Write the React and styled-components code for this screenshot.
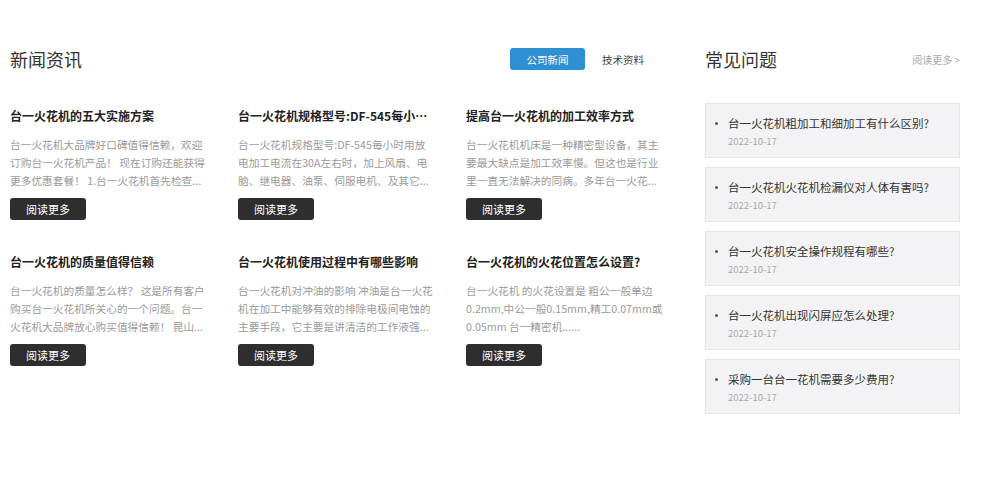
import styled, { createGlobalStyle } from "styled-components";

const GlobalStyle = createGlobalStyle`
    body{
        margin:0;
        background:#fff;
        font-family:"Noto Sans CJK SC","Noto Sans",sans-serif;
        color:#333;
    }
`

const Page = styled.div`
    display:flex;
    align-items:flex-start;
    padding:46px 0 0 10px;
    gap:44px;
`
const NewsSection = styled.section`
    width:651px;
`
const FaqSection = styled.section`
    width:255px;
`
const Header = styled.div`
    display:flex;
    align-items:center;
    justify-content:space-between;
    height:26px;
`
const Heading = styled.h2`
    margin:0;
    font-size:18px;
    font-weight:normal;
    color:#333;
    line-height:26px;
`
const Tabs = styled.div`
    display:flex;
    align-items:center;
    gap:17px;
    margin-right:17px;
`
const Tab = styled.span`
    display:inline-flex;
    align-items:center;
    justify-content:${p => p.active ? "center" : "flex-start"};
    width:${p => p.active ? "75px" : "auto"};
    height:22px;
    border-radius:3px;
    font-size:10.5px;
    background:${p => p.active ? "#2f8fd3" : "transparent"};
    color:${p => p.active ? "#fff" : "#444"};
`
const CardGrid = styled.div`
    display:grid;
    grid-template-columns:repeat(3,195px);
    column-gap:33px;
    row-gap:33px;
    margin-top:35px;
`
const Card = styled.div`
    display:flex;
    flex-direction:column;
    align-items:flex-start;
`
const CardTitle = styled.h3`
    margin:0;
    font-size:12px;
    line-height:18px;
    font-weight:bold;
    color:#222;
    white-space:nowrap;
    overflow:hidden;
    text-overflow:ellipsis;
    width:196px;
`
const CardText = styled.p`
    margin:11px 0 0;
    width:198px;
    font-size:10.7px;
    line-height:18px;
    color:#9a9a9a;
    height:54px;
    overflow:hidden;
    display:-webkit-box;
    -webkit-box-orient:vertical;
    -webkit-line-clamp:3;
`
const ReadBtn = styled.button`
    margin-top:8px;
    width:76px;
    height:22px;
    border:none;
    border-radius:3px;
    background:#2e2e2e;
    color:#fff;
    font-family:inherit;
    font-size:11px;
    padding:0;
`
const MoreLink = styled.a`
    font-size:10px;
    color:#aaa;
    text-decoration:none;
`
const FaqList = styled.ul`
    list-style:none;
    margin:31px 0 0;
    padding:0;
    display:flex;
    flex-direction:column;
    gap:9px;
`
const FaqItem = styled.li`
    background:#f3f3f5;
    border:1px solid #e6e6ea;
    height:55px;
    box-sizing:border-box;
    padding:11px 0 0 9px;
`
const FaqTitle = styled.div`
    display:flex;
    align-items:center;
    gap:10px;
    font-size:11.5px;
    line-height:16px;
    color:#333;
    &::before{
        content:"";
        width:3px;
        height:3px;
        background:#555;
        border-radius:50%;
    }
`
const FaqDate = styled.div`
    margin:3px 0 0 13px;
    font-size:9.5px;
    line-height:14px;
    color:#aaa;
`

const news = [
    { title: "台一火花机的五大实施方案", text: "台一火花机大品牌好口碑值得信赖，欢迎订购台一火花机产品！ 现在订购还能获得更多优惠套餐！ 1.台一火花机首先检查..." },
    { title: "台一火花机规格型号:DF-545每小时用放电加工电流在30A左右时", text: "台一火花机规格型号:DF-545每小时用放电加工电流在30A左右时，加上风扇、电脑、继电器、油泵、伺服电机、及其它..." },
    { title: "提高台一火花机的加工效率方式", text: "台一火花机机床是一种精密型设备，其主要最大缺点是加工效率慢。但这也是行业里一直无法解决的同病。多年台一火花..." },
    { title: "台一火花机的质量值得信赖", text: "台一火花机的质量怎么样？ 这是所有客户购买台一火花机所关心的一个问题。台一火花机大品牌放心购买值得信赖！ 昆山..." },
    { title: "台一火花机使用过程中有哪些影响", text: "台一火花机对冲油的影响 冲油是台一火花机在加工中能够有效的排除电极间电蚀的主要手段，它主要是讲清洁的工作液强..." },
    { title: "台一火花机的火花位置怎么设置?", text: "台一火花机 的火花设置是 粗公一般单边0.2mm,中公一般0.15mm,精工0.07mm或0.05mm 台一精密机......" },
]

const faqs = [
    "台一火花机粗加工和细加工有什么区别?",
    "台一火花机火花机检漏仪对人体有害吗?",
    "台一火花机安全操作规程有哪些?",
    "台一火花机出现闪屏应怎么处理?",
    "采购一台台一花机需要多少费用?",
]

function App(){
    return(
        <>
            <GlobalStyle />
            <Page>
                <NewsSection>
                    <Header>
                        <Heading>新闻资讯</Heading>
                        <Tabs>
                            <Tab active>公司新闻</Tab>
                            <Tab>技术资料</Tab>
                        </Tabs>
                    </Header>
                    <CardGrid>
                        {news.map(n => (
                            <Card key={n.title}>
                                <CardTitle>{n.title}</CardTitle>
                                <CardText>{n.text}</CardText>
                                <ReadBtn>阅读更多</ReadBtn>
                            </Card>
                        ))}
                    </CardGrid>
                </NewsSection>
                <FaqSection>
                    <Header>
                        <Heading>常见问题</Heading>
                        <MoreLink href="#">阅读更多 &gt;</MoreLink>
                    </Header>
                    <FaqList>
                        {faqs.map(q => (
                            <FaqItem key={q}>
                                <FaqTitle>{q}</FaqTitle>
                                <FaqDate>2022-10-17</FaqDate>
                            </FaqItem>
                        ))}
                    </FaqList>
                </FaqSection>
            </Page>
        </>
    )
}
export default App;
